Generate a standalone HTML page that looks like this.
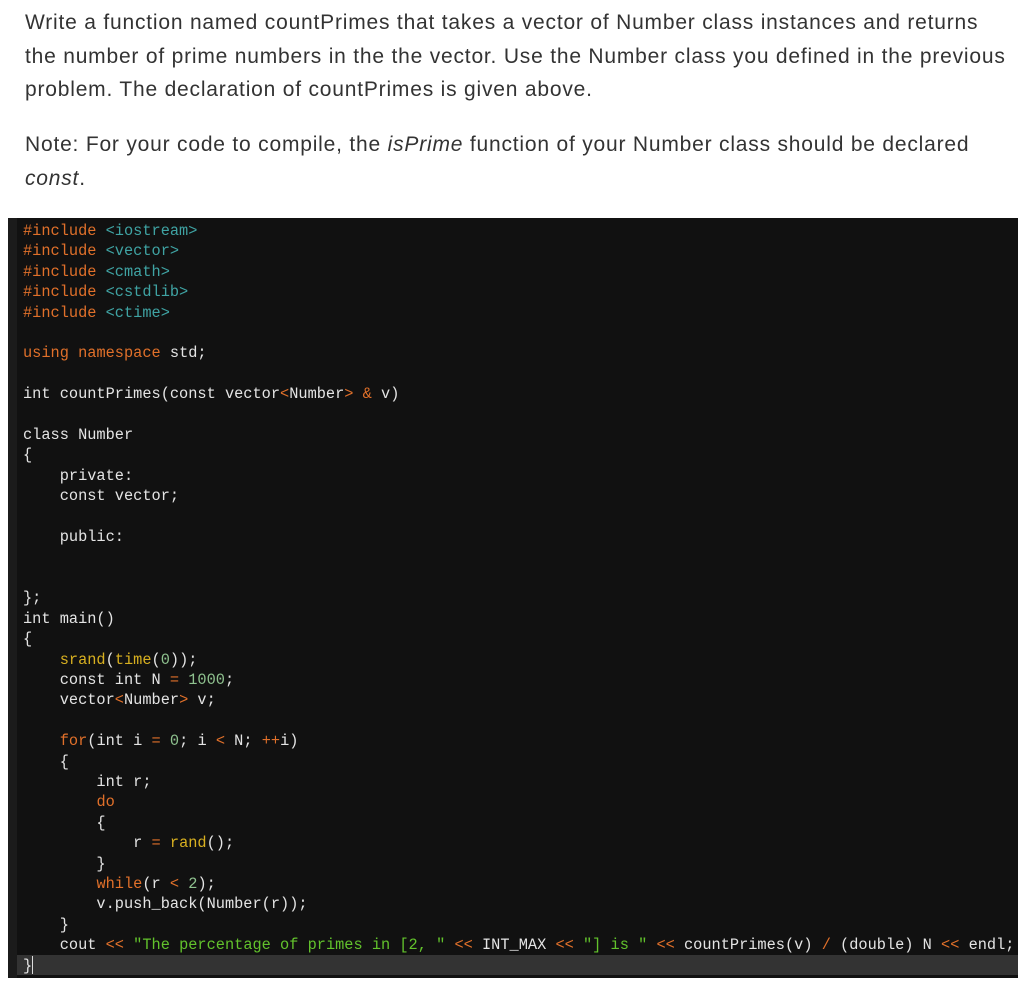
<!DOCTYPE html>
<html><head><meta charset="utf-8"><style>
html,body{margin:0;padding:0;background:#fff;width:1024px;height:986px;overflow:hidden}
.p{position:absolute;left:25px;font-family:"Liberation Sans",sans-serif;font-size:21px;letter-spacing:0.8px;color:#333;line-height:33.5px;white-space:nowrap}
.code{position:absolute;left:8px;top:218px;width:1010px;height:760px;background:#111;}
.gut{position:absolute;left:0;top:0;width:9px;height:760px;background:#1b1b1b}
.hl{position:absolute;left:9px;top:737px;width:1001px;height:20px;background:#333}
pre{position:absolute;left:15px;top:3px;margin:0;font-family:"Liberation Mono",monospace;font-size:15.3px;line-height:20.4px;color:#e4e4e4}
.o{color:#e0702a}.t{color:#3fa3a3}.s{color:#62c22c}.n{color:#8fc28f}.y{color:#d8b020}
.cur{display:inline-block;width:1px;height:18px;background:#ddd;vertical-align:-4px}
</style></head><body>
<div class="p" style="top:6px">Write a function named countPrimes that takes a vector of Number class instances and returns<br>the number of prime numbers in the the vector. Use the Number class you defined in the previous<br>problem. The declaration of countPrimes is given above.</div>
<div class="p" style="top:128px">Note: For your code to compile, the <i>isPrime</i> function of your Number class should be declared<br><i>const</i>.</div>
<div class="code"><div class="gut"></div><div class="hl"></div>
<pre><span class="o">#include</span> <span class="t">&lt;iostream&gt;</span>
<span class="o">#include</span> <span class="t">&lt;vector&gt;</span>
<span class="o">#include</span> <span class="t">&lt;cmath&gt;</span>
<span class="o">#include</span> <span class="t">&lt;cstdlib&gt;</span>
<span class="o">#include</span> <span class="t">&lt;ctime&gt;</span>

<span class="o">using</span> <span class="o">namespace</span> std;

int countPrimes(const vector<span class="o">&lt;</span>Number<span class="o">&gt;</span> <span class="o">&amp;</span> v)

class Number
{
    private:
    const vector;

    public:


};
int main()
{
    <span class="y">srand</span>(<span class="y">time</span>(<span class="n">0</span>));
    const int N <span class="o">=</span> <span class="n">1000</span>;
    vector<span class="o">&lt;</span>Number<span class="o">&gt;</span> v;

    <span class="o">for</span>(int i <span class="o">=</span> <span class="n">0</span>; i <span class="o">&lt;</span> N; <span class="o">++</span>i)
    {
        int r;
        <span class="o">do</span>
        {
            r <span class="o">=</span> <span class="y">rand</span>();
        }
        <span class="o">while</span>(r <span class="o">&lt;</span> <span class="n">2</span>);
        v.push_back(Number(r));
    }
    cout <span class="o">&lt;&lt;</span> <span class="s">"The percentage of primes in [2, "</span> <span class="o">&lt;&lt;</span> INT_MAX <span class="o">&lt;&lt;</span> <span class="s">"] is "</span> <span class="o">&lt;&lt;</span> countPrimes(v) <span class="o">/</span> (double) N <span class="o">&lt;&lt;</span> endl;
}<span class="cur"></span></pre></div>
</body></html>
